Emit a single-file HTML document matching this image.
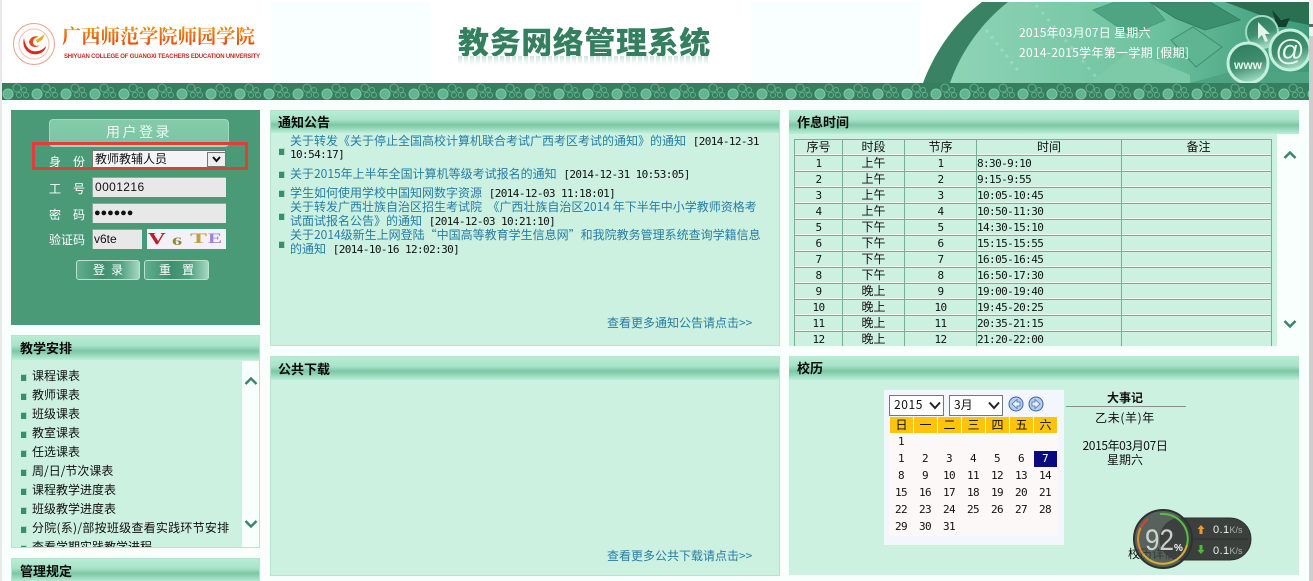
<!DOCTYPE html>
<html lang="zh">
<head>
<meta charset="utf-8">
<title>教务网络管理系统</title>
<style>
html,body{margin:0;padding:0;width:1313px;height:581px;overflow:hidden;background:#f8fffd;}
body{position:relative;font:12px/14px "WenQuanYi Zen Hei","Noto Sans CJK SC",sans-serif;color:#111;}
div,span,svg{position:absolute;}
.t{white-space:nowrap;line-height:14px;}
.panel{background:#ccf1e1;box-sizing:border-box;border:1px solid #b4e5cf;}
.hd{left:0;right:0;top:0;height:23px;background:linear-gradient(#b8edd5 0,#a8e3c9 40%,#7cc6a6 62%,#8fd3b5 75%,#bceed8 100%);}
.hd b{position:absolute;left:8px;top:3px;font-size:13px;line-height:15px;font-weight:bold;color:#0a0a0a;font-family:"WenQuanYi Zen Hei","Noto Sans CJK SC",sans-serif;}
.b{width:6px;height:7px;background:#3b8d6b;border-top:1px solid #a8d8c2;border-right:1px solid #a8d8c2;box-sizing:border-box;}
.l{color:#277da3;}
.w{color:#fff;}
.inp{background:#e8e8e8;border-top:1px solid #8fa89c;border-left:1px solid #8fa89c;box-sizing:border-box;}
.row{left:0;width:478px;height:16px;box-sizing:border-box;border-top:1px solid #6fb296;border-bottom:1px solid #e8f8f0;}
.c{text-align:center;}
.mono{font-family:"DejaVu Sans Mono","Liberation Mono",monospace;font-size:11px;letter-spacing:-.6px;}
span.mono{position:static;color:#111;margin-left:4px;}
.cal .t{font:11px/16px "DejaVu Sans Mono",monospace;letter-spacing:-.6px;}
.tb .t[style*="left:1px"]:not([style*="top:1px"]),.tb .t[style*="left:111px"]:not([style*="top:1px"]),.tb .t[style*="left:183px"]:not([style*="top:1px"]){font:11px/16px "DejaVu Sans Mono",monospace;letter-spacing:-.6px;}
</style>
</head>
<body>
<!-- header -->
<div style="left:0;top:0;width:1309px;height:83px;background:#fff"></div>
<div style="left:270px;top:2px;width:160px;height:81px;background:#f8fffe"></div>
<div style="left:750px;top:2px;width:170px;height:81px;background:#f8fffe"></div>
<div style="left:0;top:0;width:2px;height:581px;background:#e6e9e8;z-index:9"></div>

<svg style="left:12px;top:22px" width="46" height="46" viewBox="0 0 46 46">
<circle cx="22" cy="22" r="20.5" fill="#fff" stroke="#e8a090" stroke-width="1"/>
<circle cx="22" cy="22" r="15" fill="none" stroke="#efc0b0" stroke-width="1"/>
<path d="M12 16c-3 10 5 18 14 16 5-1 8-5 8-8-3 4-8 6-13 5-5-1-8-6-9-13z" fill="#dd2a18"/>
<path d="M17 20c1-5 6-7 10-5-3 0-6 2-6 5 0 3 3 5 7 3-3 3-10 3-11-3z" fill="#e44a20"/>
<path d="M24 18l9-6-3 6-5 3z" fill="#e8b020"/>
</svg>
<div class="t" style="left:62px;top:22px;font:bold 19.200px/28px 'Noto Serif CJK SC',serif;letter-spacing:.1px;background:linear-gradient(#f2a010,#e03a14);-webkit-background-clip:text;background-clip:text;color:transparent">广西师范学院师园学院</div>
<div class="t" style="left:64px;top:52px;font:6px/10px 'Liberation Sans',sans-serif;color:#c92a20;letter-spacing:-.19px;font-weight:bold">SHIYUAN COLLEGE OF GUANGXI TEACHERS EDUCATION UNIVERSITY</div>

<div class="t" style="left:458px;top:21px;font:900 31px/40px 'Noto Sans CJK SC',sans-serif;color:#347f60;letter-spacing:.6px">教务网络管理系统</div>
<div style="left:458px;top:56px;width:252px;height:9px;background:repeating-linear-gradient(90deg,#cfe5dc 0 4px,#fff 4px 6px);-webkit-mask-image:linear-gradient(#000,transparent);mask-image:linear-gradient(#000,transparent)"></div>

<svg style="left:900px;top:2px" width="409" height="81" viewBox="0 0 409 81">
<defs>
<linearGradient id="g" x1="0" y1="0" x2="1" y2="0"><stop offset="0" stop-color="#8ed4b6"/><stop offset=".55" stop-color="#6fc3a0"/><stop offset="1" stop-color="#3c9a78"/></linearGradient>
<linearGradient id="s1" x1=".3" y1="0" x2=".6" y2="1"><stop offset="0" stop-color="#2f7d5e"/><stop offset=".55" stop-color="#3f9070"/><stop offset="1" stop-color="#a8e0c8"/></linearGradient>
<clipPath id="cp"><path d="M50 81C62 46 85 18 108 0H409V81Z"/></clipPath>
</defs>
<path d="M23 81C36 46 58 18 82 0H409V81Z" fill="#398263"/>
<path d="M50 81C62 46 85 18 108 0H409V81Z" fill="url(#g)"/>
<g clip-path="url(#cp)">
<path d="M193 8L215 0H250L265 18L230 33Z" fill="#4fa583" stroke="#4a9c7c"/>
<path d="M250 0H310L340 18L305 28L275 16Z" fill="#3b8f6e" stroke="#357f62"/>
<path d="M325 0H409V23L360 13Z" fill="#2a6f52"/>
<path d="M271 38L293 25L322 45L296 65Z" fill="#5fb592" stroke="#3f8e6e"/>
<path d="M190 81L230 48L290 73V81Z" fill="#7ccaa8"/>
<path d="M290 81L330 70H409V81Z" fill="#4ea482"/>
<path d="M86 28L120 71" stroke="#a8e2cb" stroke-width="3" stroke-dasharray="3 5" opacity=".6"/>
<path d="M136 3L196 75" stroke="#a8e2cb" stroke-width="3" stroke-dasharray="3 6" opacity=".5"/>
<path d="M372 8l9 10 9-2-4 9-9 0z" fill="#15402f"/>
</g>
<circle cx="362" cy="30" r="16" fill="url(#s1)" stroke="#9fdcc3" stroke-width="2"/>
<path d="M358 20l0 17 4-4 3 7 3-1-3-7 5 0z" fill="#e4f4ec"/>
<circle cx="390" cy="48" r="20" fill="url(#s1)" stroke="#c4eedd" stroke-width="3"/>
<circle cx="348" cy="61" r="20" fill="url(#s1)" stroke="#c4eedd" stroke-width="3"/>
<text x="390" y="58" font-family="Liberation Sans,sans-serif" font-size="29" text-anchor="middle" fill="#e8f6ef">@</text>
<text x="348" y="67" font-family="Liberation Sans,sans-serif" font-size="12" font-weight="bold" text-anchor="middle" fill="#e8f6ef">www</text>
</svg>
<div class="t w" style="left:1019px;top:26px;font-size:12px;letter-spacing:.25px">2015年03月07日 星期六</div>
<div class="t w" style="left:1019px;top:46px;font-size:12px;letter-spacing:.3px">2014-2015学年第一学期 [假期]</div>

<!-- band -->
<svg style="left:0;top:83px" width="1309" height="17">
<defs><pattern id="bub" width="29" height="17" patternUnits="userSpaceOnUse" x="2">
<rect width="29" height="17" fill="#357f5f"/>
<circle cx="6" cy="11" r="5" fill="#63b592" stroke="#7fc8a8" stroke-width="1"/>
<circle cx="15" cy="5" r="4" fill="none" stroke="#62ad8d"/>
<circle cx="22" cy="7" r="2.500" fill="none" stroke="#62ad8d"/>
<circle cx="17" cy="12" r="2.500" fill="none" stroke="#62ad8d"/>
<circle cx="24" cy="12" r="2.500" fill="none" stroke="#62ad8d"/>
</pattern></defs>
<rect width="1309" height="17" fill="url(#bub)"/>
</svg>

<div style="left:1309px;top:0;width:4px;height:36px;background:#f0f0f0"></div>
<div style="left:1309px;top:24px;width:4px;height:3px;background:#666"></div>
<div style="left:1309px;top:36px;width:4px;height:545px;background:#cdcdcd"></div>

<!-- login -->
<div style="left:11px;top:110px;width:249px;height:215px;background:#4a9a78"></div>
<div style="left:49px;top:119px;width:180px;height:28px;box-sizing:border-box;border:1px solid #a3d8bf;border-radius:4px;background:linear-gradient(#84cba9 0,#7cc6a4 85%,#a8dcc4 100%)"></div>
<div class="t w c" style="left:49px;top:124px;width:180px;font-size:14px;line-height:16px;letter-spacing:2.500px;color:#eefaf4">用户登录</div>
<div class="t w" style="left:49px;top:155px">身</div><div class="t w" style="left:73px;top:155px">份</div>
<div style="left:92px;top:150px;width:134px;height:19px;background:#f4f4f4;border:1px solid #777;border-width:1px 1px 0 1px;box-sizing:border-box"></div>
<div class="t" style="left:95px;top:152px">教师教辅人员</div>
<div style="left:207px;top:152px;width:19px;height:15px;background:#eee;border:1px solid #777;box-sizing:border-box"></div>
<svg style="left:208px;top:153px" width="17" height="13"><path d="M5 4l3.500 4 3.500-4" fill="none" stroke="#111" stroke-width="2"/></svg>
<div class="t w" style="left:49px;top:182px">工</div><div class="t w" style="left:73px;top:182px">号</div>
<div class="inp" style="left:92px;top:177px;width:134px;height:20px"></div>
<div class="t" style="left:95px;top:180px;font-family:'Liberation Sans',sans-serif;letter-spacing:.4px">0001216</div>
<div class="t w" style="left:49px;top:208px">密</div><div class="t w" style="left:73px;top:208px">码</div>
<div class="inp" style="left:92px;top:203px;width:134px;height:20px"></div>
<div class="t" style="left:94px;top:206px;font-family:'Liberation Sans',sans-serif;font-size:11px;letter-spacing:-.1px;font-weight:bold">●●●●●●</div>
<div class="t w" style="left:49px;top:233px">验证码</div>
<div class="inp" style="left:92px;top:229px;width:50px;height:20px"></div>
<div class="t" style="left:94px;top:232px;font-family:'Liberation Sans',sans-serif">v6te</div>
<div style="left:147px;top:229px;width:79px;height:20px;background:#f3f0f8"></div>
<div class="t" style="left:148px;top:231px;font:bold 17px/15px 'Liberation Serif',serif;color:#b8202a;transform:scaleX(1.450);transform-origin:0 0">V</div>
<div class="t" style="left:172px;top:236px;font:bold 12px/11px 'Liberation Serif',serif;color:#8a8a30;transform:scaleX(1.700);transform-origin:0 0">6</div>
<div class="t" style="left:190px;top:232px;font:bold 15px/14px 'Liberation Serif',serif;color:#c0a040;transform:scaleX(1.700);transform-origin:0 0">T</div>
<div class="t" style="left:208px;top:232px;font:bold 15px/14px 'Liberation Serif',serif;color:#a080d8;transform:scaleX(1.400);transform-origin:0 0">E</div>
<div style="left:76px;top:260px;width:64px;height:20px;box-sizing:border-box;border:1px solid #b9e2cf;border-radius:3px;background:linear-gradient(90deg,#5fae8c,#3f8e6e 40%,#4f9e7e 70%,#a5d8c0)"></div>
<div class="t w c" style="left:76px;top:263px;width:64px;letter-spacing:6px;text-indent:6px">登录</div>
<div style="left:144px;top:260px;width:65px;height:20px;box-sizing:border-box;border:1px solid #b9e2cf;border-radius:3px;background:linear-gradient(90deg,#5fae8c,#3f8e6e 40%,#4f9e7e 70%,#a5d8c0)"></div>
<div class="t w c" style="left:144px;top:263px;width:65px;letter-spacing:11px;text-indent:11px">重置</div>
<div style="left:32px;top:142px;width:216px;height:28px;box-sizing:border-box;border:3px solid #df3f38"></div>

<!-- 教学安排 -->
<div class="panel" style="left:11px;top:335px;width:249px;height:213px;overflow:hidden">
<div class="hd" style="height:24px"><b style="left:8px;top:4px">教学安排</b></div>
<div style="left:230px;top:25px;width:18px;height:190px;background:#f8fffd"></div>
<div class="b" style="left:9px;top:38px"></div><div class="t" style="left:20px;top:33px">课程课表</div>
<div class="b" style="left:9px;top:57px"></div><div class="t" style="left:20px;top:52px">教师课表</div>
<div class="b" style="left:9px;top:76px"></div><div class="t" style="left:20px;top:71px">班级课表</div>
<div class="b" style="left:9px;top:95px"></div><div class="t" style="left:20px;top:90px">教室课表</div>
<div class="b" style="left:9px;top:114px"></div><div class="t" style="left:20px;top:109px">任选课表</div>
<div class="b" style="left:9px;top:133px"></div><div class="t" style="left:20px;top:128px">周/日/节次课表</div>
<div class="b" style="left:9px;top:152px"></div><div class="t" style="left:20px;top:147px">课程教学进度表</div>
<div class="b" style="left:9px;top:171px"></div><div class="t" style="left:20px;top:166px">班级教学进度表</div>
<div class="b" style="left:9px;top:190px"></div><div class="t" style="left:20px;top:185px;letter-spacing:.25px">分院(系)/部按班级查看实践环节安排</div>
<div class="b" style="left:9px;top:209px"></div><div class="t" style="left:20px;top:204px">查看学期实践教学进程</div>
<svg style="left:232px;top:40px" width="14" height="10"><path d="M1.500 8L7 2.500 12.500 8" fill="none" stroke="#3b8568" stroke-width="2.500"/></svg>
<svg style="left:232px;top:183px" width="14" height="10"><path d="M1.500 2L7 7.500 12.500 2" fill="none" stroke="#3b8568" stroke-width="2.500"/></svg>
</div>
<div class="panel" style="left:11px;top:558px;width:249px;height:30px">
<div class="hd" style="height:23px"><b style="top:4px">管理规定</b></div>
</div>

<!-- 通知公告 -->
<div class="panel" style="left:270px;top:110px;width:510px;height:236px">
<div class="hd" style="height:22px"><b style="top:3px;left:7px">通知公告</b></div>
<div class="b" style="left:8px;top:37px"></div>
<div class="t l" style="left:19px;top:23px">关于转发《关于停止全国高校计算机联合考试广西考区考试的通知》的通知 <span class="mono">[2014-12-31</span></div>
<div class="t mono" style="left:19px;top:37px">10:54:17]</div>
<div class="b" style="left:8px;top:60px"></div>
<div class="t l" style="left:19px;top:56px">关于2015年上半年全国计算机等级考试报名的通知 <span class="mono">[2014-12-31 10:53:05]</span></div>
<div class="b" style="left:8px;top:79px"></div>
<div class="t l" style="left:19px;top:75px">学生如何使用学校中国知网数字资源 <span class="mono">[2014-12-03 11:18:01]</span></div>
<div class="b" style="left:8px;top:102px"></div>
<div class="t l" style="left:19px;top:89px">关于转发广西壮族自治区招生考试院 &nbsp;《广西壮族自治区2014 年下半年中小学教师资格考</div>
<div class="t l" style="left:19px;top:103px">试面试报名公告》的通知 <span class="mono">[2014-12-03 10:21:10]</span></div>
<div class="b" style="left:8px;top:130px"></div>
<div class="t l" style="left:19px;top:117px">关于2014级新生上网登陆“中国高等教育学生信息网”和我院教务管理系统查询学籍信息</div>
<div class="t l" style="left:19px;top:131px">的通知 <span class="mono">[2014-10-16 12:02:30]</span></div>
<div class="t l" style="left:336px;top:205px">查看更多通知公告请点击&gt;&gt;</div>
</div>

<!-- 公共下载 -->
<div class="panel" style="left:270px;top:356px;width:510px;height:220px">
<div class="hd" style="height:23px"><b style="top:4px;left:7px">公共下载</b></div>
<div class="t l" style="left:336px;top:192px">查看更多公共下载请点击&gt;&gt;</div>
</div>

<!-- 作息时间 -->
<div class="panel" style="left:789px;top:110px;width:510px;height:236px;overflow:hidden;border:0">
<div class="hd" style="height:24px"><b style="top:4px;left:8px">作息时间</b></div>
<div style="left:488px;top:24px;width:22px;height:212px;background:#f8fffd"></div>
<div class="tb" style="left:5px;top:29px;width:478px;height:207px;overflow:hidden">
<div class="row" style="top:0"></div><div class="row" style="top:16px"></div><div class="row" style="top:32px"></div><div class="row" style="top:48px"></div><div class="row" style="top:64px"></div><div class="row" style="top:80px"></div><div class="row" style="top:96px"></div><div class="row" style="top:112px"></div><div class="row" style="top:128px"></div><div class="row" style="top:144px"></div><div class="row" style="top:160px"></div><div class="row" style="top:176px"></div><div class="row" style="top:192px"></div>
<div style="left:0;top:0;width:1px;height:207px;background:#6fb296"></div>
<div style="left:48px;top:0;width:1px;height:207px;background:#6fb296"></div>
<div style="left:110px;top:0;width:1px;height:207px;background:#6fb296"></div>
<div style="left:182px;top:0;width:1px;height:207px;background:#6fb296"></div>
<div style="left:327px;top:0;width:1px;height:207px;background:#6fb296"></div>
<div style="left:477px;top:0;width:1px;height:207px;background:#6fb296"></div>
<div class="t c" style="left:1px;top:1px;width:47px">序号</div><div class="t c" style="left:49px;top:1px;width:61px">时段</div><div class="t c" style="left:111px;top:1px;width:71px">节序</div><div class="t c" style="left:183px;top:1px;width:144px">时间</div><div class="t c" style="left:330px;top:1px;width:149px">备注</div>

<div class="t c" style="left:1px;top:17px;width:47px">1</div><div class="t c" style="left:49px;top:17px;width:61px">上午</div><div class="t c" style="left:111px;top:17px;width:71px">1</div><div class="t" style="left:183px;top:17px">8:30-9:10</div>
<div class="t c" style="left:1px;top:33px;width:47px">2</div><div class="t c" style="left:49px;top:33px;width:61px">上午</div><div class="t c" style="left:111px;top:33px;width:71px">2</div><div class="t" style="left:183px;top:33px">9:15-9:55</div>
<div class="t c" style="left:1px;top:49px;width:47px">3</div><div class="t c" style="left:49px;top:49px;width:61px">上午</div><div class="t c" style="left:111px;top:49px;width:71px">3</div><div class="t" style="left:183px;top:49px">10:05-10:45</div>
<div class="t c" style="left:1px;top:65px;width:47px">4</div><div class="t c" style="left:49px;top:65px;width:61px">上午</div><div class="t c" style="left:111px;top:65px;width:71px">4</div><div class="t" style="left:183px;top:65px">10:50-11:30</div>
<div class="t c" style="left:1px;top:81px;width:47px">5</div><div class="t c" style="left:49px;top:81px;width:61px">下午</div><div class="t c" style="left:111px;top:81px;width:71px">5</div><div class="t" style="left:183px;top:81px">14:30-15:10</div>
<div class="t c" style="left:1px;top:97px;width:47px">6</div><div class="t c" style="left:49px;top:97px;width:61px">下午</div><div class="t c" style="left:111px;top:97px;width:71px">6</div><div class="t" style="left:183px;top:97px">15:15-15:55</div>
<div class="t c" style="left:1px;top:113px;width:47px">7</div><div class="t c" style="left:49px;top:113px;width:61px">下午</div><div class="t c" style="left:111px;top:113px;width:71px">7</div><div class="t" style="left:183px;top:113px">16:05-16:45</div>
<div class="t c" style="left:1px;top:129px;width:47px">8</div><div class="t c" style="left:49px;top:129px;width:61px">下午</div><div class="t c" style="left:111px;top:129px;width:71px">8</div><div class="t" style="left:183px;top:129px">16:50-17:30</div>
<div class="t c" style="left:1px;top:145px;width:47px">9</div><div class="t c" style="left:49px;top:145px;width:61px">晚上</div><div class="t c" style="left:111px;top:145px;width:71px">9</div><div class="t" style="left:183px;top:145px">19:00-19:40</div>
<div class="t c" style="left:1px;top:161px;width:47px">10</div><div class="t c" style="left:49px;top:161px;width:61px">晚上</div><div class="t c" style="left:111px;top:161px;width:71px">10</div><div class="t" style="left:183px;top:161px">19:45-20:25</div>
<div class="t c" style="left:1px;top:177px;width:47px">11</div><div class="t c" style="left:49px;top:177px;width:61px">晚上</div><div class="t c" style="left:111px;top:177px;width:71px">11</div><div class="t" style="left:183px;top:177px">20:35-21:15</div>
<div class="t c" style="left:1px;top:193px;width:47px">12</div><div class="t c" style="left:49px;top:193px;width:61px">晚上</div><div class="t c" style="left:111px;top:193px;width:71px">12</div><div class="t" style="left:183px;top:193px">21:20-22:00</div>
</div>
<svg style="left:494px;top:40px" width="14" height="10"><path d="M1.500 8L7 2.500 12.500 8" fill="none" stroke="#3b8568" stroke-width="2.500"/></svg>
<svg style="left:494px;top:209px" width="14" height="10"><path d="M1.500 2L7 7.500 12.500 2" fill="none" stroke="#3b8568" stroke-width="2.500"/></svg>
</div>

<!-- 校历 -->
<div class="panel" style="left:789px;top:356px;width:510px;height:219px;border:0">
<div class="hd" style="height:24px"><b style="top:4px;left:8px">校历</b></div>
</div>
<div style="left:884px;top:390px;width:180px;height:155px;background:#f3f6fd"></div>
<div style="left:889px;top:417px;width:169px;height:119px;background:#fdf8f8"></div>
<div style="left:889px;top:395px;width:55px;height:21px;box-sizing:border-box;border:1px solid #777;background:#fff"></div>
<div class="t" style="left:894px;top:398px;letter-spacing:.6px">2015</div>
<svg style="left:928px;top:400px" width="14" height="11"><path d="M2 2.500L7 8 12 2.500" fill="none" stroke="#222" stroke-width="2"/></svg>
<div style="left:949px;top:395px;width:54px;height:21px;box-sizing:border-box;border:1px solid #777;background:#fff"></div>
<div class="t" style="left:954px;top:398px">3月</div>
<svg style="left:987px;top:400px" width="14" height="11"><path d="M2 2.500L7 8 12 2.500" fill="none" stroke="#222" stroke-width="2"/></svg>
<svg style="left:1008px;top:396px" width="16" height="16"><circle cx="8" cy="8" r="7" fill="#b8cdea" stroke="#3c62a8"/><path d="M9 3.500L4 8l5 4.500V10h3V6H9z" fill="#e9f1fb" stroke="#4a70b0" stroke-width=".8"/></svg>
<svg style="left:1028px;top:396px" width="16" height="16"><circle cx="8" cy="8" r="7" fill="#b8cdea" stroke="#3c62a8"/><path d="M7 3.500L12 8l-5 4.500V10H4V6h3z" fill="#e9f1fb" stroke="#4a70b0" stroke-width=".8"/></svg>

<div style="left:890px;top:417px;width:23px;height:16px;background:#fdc40a"></div><div class="t c" style="left:890px;top:418px;width:23px">日</div>
<div style="left:914px;top:417px;width:23px;height:16px;background:#fdc40a"></div><div class="t c" style="left:914px;top:418px;width:23px">一</div>
<div style="left:938px;top:417px;width:23px;height:16px;background:#fdc40a"></div><div class="t c" style="left:938px;top:418px;width:23px">二</div>
<div style="left:962px;top:417px;width:23px;height:16px;background:#fdc40a"></div><div class="t c" style="left:962px;top:418px;width:23px">三</div>
<div style="left:986px;top:417px;width:23px;height:16px;background:#fdc40a"></div><div class="t c" style="left:986px;top:418px;width:23px">四</div>
<div style="left:1010px;top:417px;width:23px;height:16px;background:#fdc40a"></div><div class="t c" style="left:1010px;top:418px;width:23px">五</div>
<div style="left:1034px;top:417px;width:23px;height:16px;background:#fdc40a"></div><div class="t c" style="left:1034px;top:418px;width:23px">六</div>

<div style="left:1034px;top:451px;width:23px;height:16px;background:#0a0a80"></div>
<div class="cal" style="left:0;top:0">
<div class="t c" style="left:889px;top:434px;width:24px">1</div>
<div class="t c" style="left:889px;top:451px;width:24px">1</div><div class="t c" style="left:913px;top:451px;width:24px">2</div><div class="t c" style="left:937px;top:451px;width:24px">3</div><div class="t c" style="left:961px;top:451px;width:24px">4</div><div class="t c" style="left:985px;top:451px;width:24px">5</div><div class="t c" style="left:1009px;top:451px;width:24px">6</div>
<div class="t c w" style="left:1033px;top:451px;width:24px">7</div>
<div class="t c" style="left:889px;top:468px;width:24px">8</div><div class="t c" style="left:913px;top:468px;width:24px">9</div><div class="t c" style="left:937px;top:468px;width:24px">10</div><div class="t c" style="left:961px;top:468px;width:24px">11</div><div class="t c" style="left:985px;top:468px;width:24px">12</div><div class="t c" style="left:1009px;top:468px;width:24px">13</div><div class="t c" style="left:1033px;top:468px;width:24px">14</div>
<div class="t c" style="left:889px;top:485px;width:24px">15</div><div class="t c" style="left:913px;top:485px;width:24px">16</div><div class="t c" style="left:937px;top:485px;width:24px">17</div><div class="t c" style="left:961px;top:485px;width:24px">18</div><div class="t c" style="left:985px;top:485px;width:24px">19</div><div class="t c" style="left:1009px;top:485px;width:24px">20</div><div class="t c" style="left:1033px;top:485px;width:24px">21</div>
<div class="t c" style="left:889px;top:502px;width:24px">22</div><div class="t c" style="left:913px;top:502px;width:24px">23</div><div class="t c" style="left:937px;top:502px;width:24px">24</div><div class="t c" style="left:961px;top:502px;width:24px">25</div><div class="t c" style="left:985px;top:502px;width:24px">26</div><div class="t c" style="left:1009px;top:502px;width:24px">27</div><div class="t c" style="left:1033px;top:502px;width:24px">28</div>
<div class="t c" style="left:889px;top:519px;width:24px">29</div><div class="t c" style="left:913px;top:519px;width:24px">30</div><div class="t c" style="left:937px;top:519px;width:24px">31</div>
</div>

<div class="t c" style="left:1066px;top:391px;width:118px;font-weight:bold">大事记</div>
<div style="left:1066px;top:406px;width:120px;height:1px;background:#8a8f8c"></div>
<div class="t c" style="left:1066px;top:411px;width:118px;letter-spacing:.6px">乙未(羊)年</div>
<div class="t c" style="left:1066px;top:439px;width:118px;letter-spacing:-.4px">2015年03月07日</div>
<div class="t c" style="left:1066px;top:453px;width:118px">星期六</div>
<div class="t" style="left:1128px;top:547px">校历详情&gt;&gt;</div>

<!-- widget -->
<svg style="left:1130px;top:505px;z-index:5" width="125" height="70" viewBox="0 0 125 70">
<rect x="30" y="13" width="91" height="42" rx="21" fill="#3b403d" stroke="#2c302e"/>
<line x1="62" y1="34" x2="118" y2="34" stroke="#2a2e2c"/>
<circle cx="33" cy="34" r="29" fill="#3d423f" fill-opacity=".82" stroke="#2d312f" stroke-width="2"/>
<path d="M10.600 23A25 25 0 0 1 18 14" fill="none" stroke="#d8452c" stroke-width="2"/>
<path d="M30 9A25 25 0 0 1 57 40" fill="none" stroke="#55c040" stroke-width="2"/>
<path d="M57 40A25 25 0 0 1 13 49" fill="none" stroke="#d9b32c" stroke-width="2"/>
<path d="M13 49A25 25 0 0 1 10.600 23" fill="none" stroke="#e58a2c" stroke-width="2"/>
<text x="15" y="45" font-family="Liberation Sans,sans-serif" font-size="30" textLength="29" lengthAdjust="spacingAndGlyphs" fill="#e4e8e4" fill-opacity=".85">92</text>
<text x="44" y="46" font-family="Liberation Sans,sans-serif" font-size="10" font-weight="bold" fill="#f0f2f0">%</text>
<path d="M71 20l-3.500 4h2v5h3v-5h2z" fill="#e69a3a"/>
<path d="M71 49l-3.500-4h2v-5h3v5h2z" fill="#4fb83a"/>
<text x="83" y="28" font-family="Liberation Sans,sans-serif" font-size="11" letter-spacing=".4" fill="#eef0ee">0.1<tspan font-size="9" letter-spacing="0" fill="#aab0ac">K/s</tspan></text>
<text x="83" y="49" font-family="Liberation Sans,sans-serif" font-size="11" letter-spacing=".4" fill="#eef0ee">0.1<tspan font-size="9" letter-spacing="0" fill="#aab0ac">K/s</tspan></text>
</svg>
</body>
</html>
